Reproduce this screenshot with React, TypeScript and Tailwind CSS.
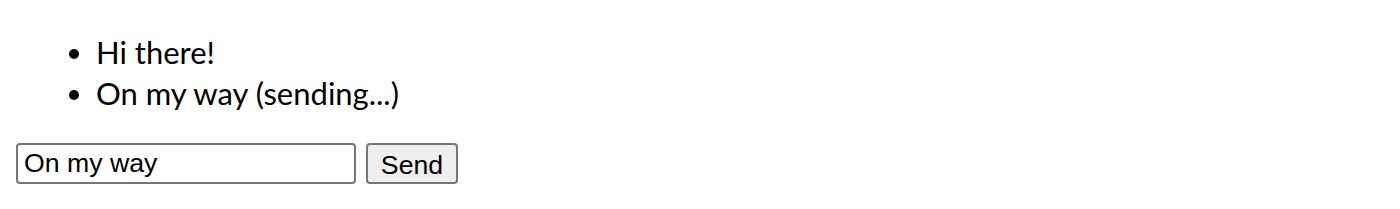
import { useState } from 'react';

export default function App() {
  const [text, setText] = useState('On my way');

  return (
    <div className="p-4 bg-white text-black">
      <ul className="list-disc pl-[80px] mt-4 mb-[29px] text-[31px] leading-[41px] font-['Lato',sans-serif]">
        <li>Hi there!</li>
        <li>On my way (sending...)</li>
      </ul>
      <form className="flex items-center gap-[10px]" onSubmit={(e) => e.preventDefault()}>
        <input
          value={text}
          onChange={(e) => setText(e.target.value)}
          className="w-[340px] h-[41px] border-2 border-[#767676] rounded-[4px] px-[6px] text-[26.67px] font-['Liberation_Sans',Arial,sans-serif] outline-none"
        />
        <button
          type="submit"
          className="w-[92px] h-[41px] border-2 border-[#767676] rounded-[4px] bg-[#efefef] text-[26.67px] font-['Liberation_Sans',Arial,sans-serif]"
        >
          Send
        </button>
      </form>
    </div>
  );
}
